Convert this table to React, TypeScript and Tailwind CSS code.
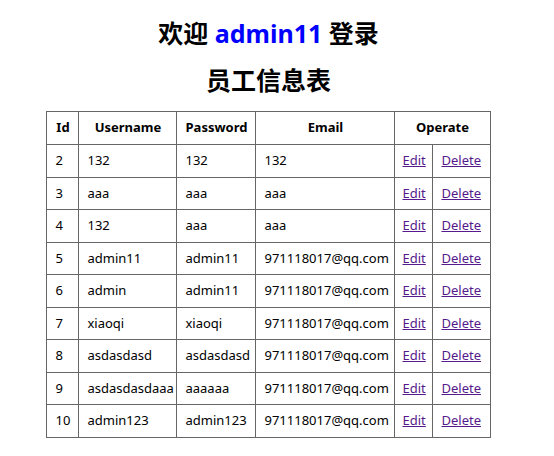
const users = [
  { id: 2, username: '132', password: '132', email: '132' },
  { id: 3, username: 'aaa', password: 'aaa', email: 'aaa' },
  { id: 4, username: '132', password: 'aaa', email: 'aaa' },
  { id: 5, username: 'admin11', password: 'admin11', email: '971118017@qq.com' },
  { id: 6, username: 'admin', password: 'admin11', email: '971118017@qq.com' },
  { id: 7, username: 'xiaoqi', password: 'xiaoqi', email: '971118017@qq.com' },
  { id: 8, username: 'asdasdasd', password: 'asdasdasd', email: '971118017@qq.com' },
  { id: 9, username: 'asdasdasdaaa', password: 'aaaaaa', email: '971118017@qq.com' },
  { id: 10, username: 'admin123', password: 'admin123', email: '971118017@qq.com' },
]

export default function App() {
  return (
    <div
      className="w-[537px] bg-white text-black"
      style={{ fontFamily: '"Noto Sans", "Noto Sans CJK SC", sans-serif' }}
    >
      <div className="flex flex-col items-center pt-[17px]">
        <h2 className="text-[25px] font-bold leading-[32px]">
          欢迎 <span className="text-[#0000ff]">admin11</span> 登录
        </h2>
        <h2 className="mt-[15px] text-[25px] font-bold leading-[32px]">员工信息表</h2>
        <table className="mt-[15px] table-fixed border-collapse text-[13px] w-[443px]">
          <colgroup>
            <col className="w-[32px]" />
            <col className="w-[98px]" />
            <col className="w-[79px]" />
            <col className="w-[139px]" />
            <col className="w-[38px]" />
            <col className="w-[57px]" />
          </colgroup>
          <thead>
            <tr className="h-[33px]">
              <th className="border border-[#666] font-bold">Id</th>
              <th className="border border-[#666] font-bold">Username</th>
              <th className="border border-[#666] font-bold">Password</th>
              <th className="border border-[#666] font-bold">Email</th>
              <th colSpan={2} className="border border-[#666] font-bold">
                Operate
              </th>
            </tr>
          </thead>
          <tbody>
            {users.map((u) => (
              <tr key={u.id} className="h-[32.5px]">
                <td className="border border-[#666] pl-[8px] whitespace-nowrap">{u.id}</td>
                <td className="border border-[#666] pl-[8px] whitespace-nowrap">{u.username}</td>
                <td className="border border-[#666] pl-[8px] whitespace-nowrap">{u.password}</td>
                <td className="border border-[#666] pl-[8px] whitespace-nowrap">{u.email}</td>
                <td className="border border-[#666] pl-[7px]">
                  <a href="#" className="text-[#551a8b] underline">Edit</a>
                </td>
                <td className="border border-[#666] pl-[8px]">
                  <a href="#" className="text-[#551a8b] underline">Delete</a>
                </td>
              </tr>
            ))}
          </tbody>
        </table>
      </div>
    </div>
  )
}
